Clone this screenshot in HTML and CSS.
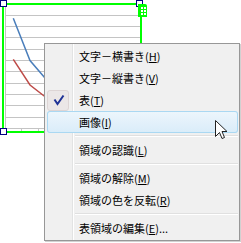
FILE: index.html
```html
<!DOCTYPE html>
<html lang="ja">
<head>
    <meta charset="UTF-8">
    <title>領域メニュー</title>
    <link rel="stylesheet" href="styles.css">
</head>
<body>

<div class="canvas">
    <!-- selected region with its chart -->
    <div class="region">
        <svg class="chart" width="136" height="126" viewBox="4 5 136 126">
            <g stroke="#c4c4c4" stroke-width="1">
                <line x1="5" y1="15.5" x2="140" y2="15.5"/>
                <line x1="5" y1="26.5" x2="140" y2="26.5"/>
                <line x1="5" y1="37.5" x2="140" y2="37.5"/>
                <line x1="5" y1="49.5" x2="140" y2="49.5"/>
                <line x1="5" y1="60.5" x2="140" y2="60.5"/>
                <line x1="5" y1="71.5" x2="140" y2="71.5"/>
                <line x1="5" y1="83.5" x2="140" y2="83.5"/>
                <line x1="5" y1="94.5" x2="140" y2="94.5"/>
                <line x1="5" y1="105.5" x2="140" y2="105.5"/>
                <line x1="5" y1="117.5" x2="140" y2="117.5"/>
                <line x1="5" y1="128.5" x2="140" y2="128.5"/>
                <line x1="5.5" y1="5" x2="5.5" y2="131"/>
                <line x1="21.5" y1="128" x2="21.5" y2="131"/>
                <line x1="38.5" y1="128" x2="38.5" y2="131"/>
            </g>
            <polyline points="13.3,18.3 30,60.5 46.7,80" fill="none" stroke="#4a7ebb" stroke-width="1.5"/>
            <polyline points="13.3,59.3 30,85 46.7,98" fill="none" stroke="#be4b48" stroke-width="1.5"/>
        </svg>
        <span class="handle handle-tl"></span>
        <span class="handle handle-tr"></span>
        <span class="handle handle-bl"></span>
        <svg class="table-mark" width="9" height="13" viewBox="0 0 9 13">
            <path d="M0 0H7Q9 0 9 2V13H0Z" fill="#00ff00"/>
            <g fill="#fff">
                <rect x="3" y="3" width="2" height="2"/>
                <rect x="6" y="3" width="2" height="2"/>
                <rect x="3" y="6" width="2" height="2"/>
                <rect x="6" y="6" width="2" height="2"/>
                <rect x="3" y="9" width="2" height="2"/>
                <rect x="6" y="9" width="2" height="2"/>
            </g>
        </svg>
    </div>

    <!-- context menu -->
    <div class="menu">
        <div class="item"><span class="icon"></span><span class="label">文字－横書き(<u>H</u>)</span></div>
        <div class="item"><span class="icon"></span><span class="label">文字－縦書き(<u>V</u>)</span></div>
        <div class="item">
            <span class="icon checked">
                <svg width="22" height="21" viewBox="0 0 22 21">
                    <path d="M7.5 9.5L10.5 14L16.5 5.5" fill="none" stroke="#1f3296" stroke-width="2"/>
                </svg>
            </span>
            <span class="label">表(<u>T</u>)</span>
        </div>
        <div class="item hover"><span class="icon"></span><span class="label">画像(<u>I</u>)</span></div>
        <div class="sep"></div>
        <div class="item"><span class="icon"></span><span class="label">領域の認識(<u>L</u>)</span></div>
        <div class="sep"></div>
        <div class="item"><span class="icon"></span><span class="label">領域の解除(<u>M</u>)</span></div>
        <div class="item"><span class="icon"></span><span class="label">領域の色を反転(<u>R</u>)</span></div>
        <div class="sep"></div>
        <div class="item"><span class="icon"></span><span class="label">表領域の編集(<u>E</u>)...</span></div>
    </div>

    <svg class="cursor" width="13" height="20" viewBox="0 0 13 20">
        <path d="M0.5 0.5V16.5L4.5 12.5L7 18.5L9.5 17.5L7 11.5H12Z" fill="#fff" stroke="#222" stroke-width="1" stroke-linejoin="miter"/>
    </svg>
</div>

</body>
</html>
```

FILE: styles.css
```css
body {
    margin: 0;
    background-color: #fff;
    font-family: "Noto Sans CJK JP", "Noto Sans", sans-serif;
    color: #000;
}
.canvas {
    position: relative;
    width: 241px;
    height: 243px;
    overflow: hidden;
}

/* selected region */
.region {
    position: absolute;
    left: 2px;
    top: 3px;
    width: 140px;
    height: 130px;
    box-sizing: border-box;
    border: 2px solid #00ff00;
    background-color: #fff;
}
.chart {
    display: block;
}
.handle {
    position: absolute;
    width: 7px;
    height: 7px;
    box-sizing: border-box;
    border: 1px solid #000080;
    background-color: #fff;
}
.handle-tl { left: -4px; top: -5px; }
.handle-tr { left: 132px; top: -5px; }
.handle-bl { left: -4px; top: 123px; }

.table-mark {
    position: absolute;
    left: 134px;
    top: -1px;
}

/* context menu */
.menu {
    position: absolute;
    left: 44px;
    top: 43px;
    width: 196px;
    box-sizing: border-box;
    padding: 1px 1px 1px 2px;
    border: 1px solid #979797;
    box-shadow: 1px 1px 0 rgba(0, 0, 0, 0.18);
    background-color: #f0f0f0;
    background-image: linear-gradient(to right, transparent 27px, #e2e3e3 27px, #e2e3e3 28px, #fff 28px, #fff 29px, transparent 29px);
    display: flex;
    flex-direction: column;
    font-size: 11px;
}
.item {
    display: flex;
    align-items: center;
    height: 22px;
    border-radius: 3px;
    line-height: 22px;
    white-space: nowrap;
}
.item.hover {
    box-shadow: inset 0 0 0 1px #aad8f2;
    background-image: linear-gradient(#edf6fc, #d9ecf9);
}
.icon {
    width: 22px;
    height: 21px;
    margin-top: 1px;
    margin-right: 10px;
    box-sizing: border-box;
    flex: none;
}
.icon.checked {
    border: 1px solid #ddd5d5;
    border-radius: 3px;
    background-color: #ebe7e7;
}
.icon svg {
    display: block;
    margin: -1px;
}
.label u {
    text-decoration: underline;
}
.sep {
    height: 2px;
    margin: 2px 0 2px 28px;
    box-sizing: border-box;
    border-top: 1px solid #e0e0e0;
    border-bottom: 1px solid #fff;
}

.cursor {
    position: absolute;
    left: 215px;
    top: 120px;
}
```
